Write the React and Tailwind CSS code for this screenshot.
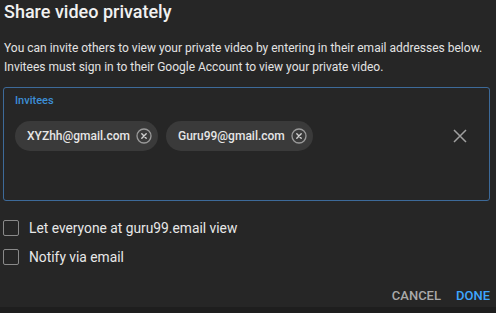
import React from "react";

const FONT = { fontFamily: "Roboto, 'Liberation Sans', sans-serif" };

function ChipX() {
  return (
    <svg width="16" height="16" viewBox="0 0 16 16" className="shrink-0">
      <circle cx="8" cy="8" r="7" fill="none" stroke="#9a9a9a" strokeWidth="1.3" />
      <path d="M5.8 5.8l4.4 4.4M10.2 5.8l-4.4 4.4" stroke="#d0d0d0" strokeWidth="1.4" strokeLinecap="round" />
    </svg>
  );
}

function Chip({ email }) {
  return (
    <div className="flex h-[30px] items-center gap-[6px] rounded-full bg-[#3a3a3a] pl-[12px] pr-[6px]">
      <span className="text-[12px] font-medium text-[#e6e6e6]">{email}</span>
      <ChipX />
    </div>
  );
}

function Check({ label }) {
  return (
    <label className="flex items-center gap-[10px]">
      <span className="h-[16px] w-[16px] rounded-[2px] border-[1.5px] border-[#8a8a8a]" />
      <span className="text-[13.8px] leading-[16px] text-[#e8e8e8]">{label}</span>
    </label>
  );
}

export default function App() {
  return (
    <div style={FONT} className="flex h-[313px] w-[496px] flex-col bg-[#262626] text-white">
      <div className="flex flex-1 flex-col px-[3px]">
        <h1 className="pl-[1px] pt-[1px] text-[18px] font-medium leading-[22px] text-[#f1f1f1]">
          Share video privately
        </h1>
        <p className="mt-[16px] pl-[1px] text-[12px] leading-[19px] text-[#e3e3e3]">
          You can invite others to view your private video by entering in their email addresses below.
          <br />
          Invitees must sign in to their Google Account to view your private video.
        </p>
        <div className="mt-[10px] mr-[3px] h-[114px] rounded-[3px] border border-[#3d6a99] px-[11px] pt-[5px]">
          <div className="text-[11px] font-medium text-[#3d8fd6]">Invitees</div>
          <div className="mt-[11px] flex items-center">
            <div className="flex gap-[8px]">
              <Chip email="XYZhh@gmail.com" />
              <Chip email="Guru99@gmail.com" />
            </div>
            <svg width="16" height="16" viewBox="0 0 16 16" className="ml-auto mr-[10px]">
              <path d="M2 2l12 12M14 2L2 14" stroke="#a0a0a0" strokeWidth="1.5" />
            </svg>
          </div>
        </div>
        <div className="mt-[19px] flex flex-col gap-[13px]">
          <Check label="Let everyone at guru99.email view" />
          <Check label="Notify via email" />
        </div>
        <div className="mt-auto flex justify-end gap-[15px] pb-[2px] pr-[3px]">
          <button className="text-[13px] font-medium text-[#aaaaaa]">CANCEL</button>
          <button className="text-[13px] font-medium text-[#3ea6ff]">DONE</button>
        </div>
      </div>
      <div className="h-[6px] bg-[#1e1e1e]" />
    </div>
  );
}
